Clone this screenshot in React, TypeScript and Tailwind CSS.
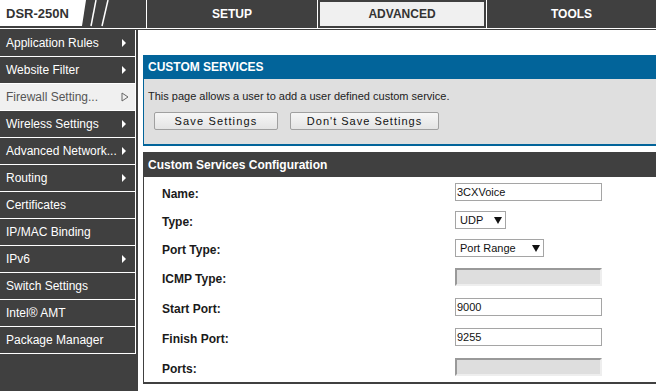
import React from "react";

const menu = [
  { label: "Application Rules", arrow: true },
  { label: "Website Filter", arrow: true },
  { label: "Firewall Setting...", arrow: true, active: true },
  { label: "Wireless Settings", arrow: true },
  { label: "Advanced Network...", arrow: true },
  { label: "Routing", arrow: true },
  { label: "Certificates" },
  { label: "IP/MAC Binding" },
  { label: "IPv6", arrow: true },
  { label: "Switch Settings" },
  { label: "Intel® AMT" },
  { label: "Package Manager" },
];

function Arrow({ active }: { active?: boolean }) {
  return active ? (
    <svg width="8" height="10" viewBox="0 0 8 10" className="shrink-0">
      <polygon points="1,1 7,5 1,9" fill="none" stroke="#666" strokeWidth="1" />
    </svg>
  ) : (
    <svg width="8" height="10" viewBox="0 0 8 10" className="shrink-0">
      <polygon points="1,1 5,5 1,9" fill="#fff" />
    </svg>
  );
}

function Caret() {
  return (
    <svg width="8" height="7" viewBox="0 0 8 7">
      <polygon points="0,0 8,0 4,7" fill="#111" />
    </svg>
  );
}

function TextInput({ value }: { value: string }) {
  return (
    <div className="w-[147px] h-[18px] border border-[#a5a5a5] bg-white flex items-center pl-[1px] text-[11px] text-[#111]">
      {value}
    </div>
  );
}

function DisabledInput() {
  return (
    <div className="w-[147px] h-[18px] bg-[#dedede] border-2 border-t-[#999] border-l-[#999] border-r-[#eeeeee] border-b-[#eeeeee]" />
  );
}

function Select({ value, width, caretGap }: { value: string; width: string; caretGap: string }) {
  return (
    <div className={`${width} h-[18px] border border-[#a5a5a5] bg-white flex items-center pl-[4px] text-[11px] text-[#111]`}>
      <span className={caretGap}>{value}</span>
      <Caret />
    </div>
  );
}

const rows: { label: string; h: string; field: React.ReactNode }[] = [
  { label: "Name:", h: "h-[28px]", field: <TextInput value="3CXVoice" /> },
  { label: "Type:", h: "h-[28px]", field: <Select value="UDP" width="w-[51px]" caretGap="mr-[11px]" /> },
  { label: "Port Type:", h: "h-[28px]", field: <Select value="Port Range" width="w-[89px]" caretGap="mr-[16px]" /> },
  { label: "ICMP Type:", h: "h-[30px]", field: <DisabledInput /> },
  { label: "Start Port:", h: "h-[30px]", field: <TextInput value="9000" /> },
  { label: "Finish Port:", h: "h-[30px]", field: <TextInput value="9255" /> },
  { label: "Ports:", h: "h-[30px]", field: <DisabledInput /> },
];

export default function App() {
  return (
    <div
      className="w-[656px] h-[391px] overflow-hidden bg-white flex flex-col"
      style={{ fontFamily: '"Liberation Sans", Arial, sans-serif' }}
    >
      {/* Top bar */}
      <div className="h-[28px] flex bg-[#404040] shrink-0">
        <div className="w-[146px] relative">
          <svg width="146" height="28" viewBox="0 0 146 28" className="absolute inset-0">
            <polygon points="0,0 86,0 82,26 0,26" fill="#fff" />
            <line x1="96" y1="0" x2="91" y2="26" stroke="#fff" strokeWidth="1.5" />
            <line x1="108" y1="0" x2="102" y2="26" stroke="#fff" strokeWidth="1.5" />
          </svg>
          <span className="absolute left-[6px] top-[6px] text-[13px] font-bold text-[#333] leading-[15px]">
            DSR-250N
          </span>
        </div>
        <div className="w-px bg-white" />
        <div className="w-[170px] flex items-center justify-center text-white text-[12px] font-bold">SETUP</div>
        <div className="w-px bg-white" />
        <div className="w-[168px] flex items-center justify-center text-[#333] text-[12px] font-bold bg-[#f0f0f0] border-2 border-[#404040]">
          ADVANCED
        </div>
        <div className="w-px bg-white" />
        <div className="flex-1 flex items-center justify-center text-white text-[12px] font-bold">TOOLS</div>
      </div>
      <div className="h-px bg-white shrink-0" />

      <div className="flex flex-1 min-h-0">
        {/* Sidebar */}
        <div className="w-[138px] bg-[#404040] pt-px shrink-0">
          {menu.map((m) => (
            <div
              key={m.label}
              className={`w-[136px] h-[27px] border-b border-r border-white flex items-center justify-between pl-[6px] pr-[6px] text-[12px] ${
                m.active ? "bg-[#f0f0f0] text-[#555]" : "text-white"
              }`}
            >
              <span className="whitespace-nowrap">{m.label}</span>
              {m.arrow && <Arrow active={m.active} />}
            </div>
          ))}
        </div>

        {/* Content */}
        <div className="flex-1 border-t border-[#404040] pl-[5px] pt-[25px]">
          <div className="border-l border-b-2 border-[#02649a]">
            <div className="h-[24px] bg-[#02649a] flex items-center pl-[4px] text-white text-[12px] font-bold">
              CUSTOM SERVICES
            </div>
            <div className="bg-[#dfdfdf] h-[65px] pl-[4px] pt-[11px]">
              <div className="text-[11px] text-[#222] leading-[13px]">
                This page allows a user to add a user defined custom service.
              </div>
              <div className="flex gap-[12px] mt-[9px] ml-[6px]">
                <button className="w-[124px] h-[18px] border border-[#a0a0a0] rounded-[2px] bg-gradient-to-b from-[#f6f6f6] to-[#e4e4e4] text-[11px] tracking-[1.15px] text-[#111]">
                  Save Settings
                </button>
                <button className="w-[149px] h-[18px] border border-[#a0a0a0] rounded-[2px] bg-gradient-to-b from-[#f6f6f6] to-[#e4e4e4] text-[11px] tracking-[1px] text-[#111]">
                  Don't Save Settings
                </button>
              </div>
            </div>
          </div>

          <div className="mt-[6px] border-l border-b-2 border-[#404040]">
            <div className="h-[25px] bg-[#404040] flex items-center pl-[4px] text-white text-[12px] font-bold">
              Custom Services Configuration
            </div>
            <div className="pt-px">
              {rows.map((r) => (
                <div key={r.label} className={`${r.h} flex items-center`}>
                  <div className="w-[311px] pl-[18px] pt-[4px] text-[12px] font-bold text-[#1a1a1a]">{r.label}</div>
                  {r.field}
                </div>
              ))}
            </div>
          </div>
        </div>
      </div>
    </div>
  );
}
